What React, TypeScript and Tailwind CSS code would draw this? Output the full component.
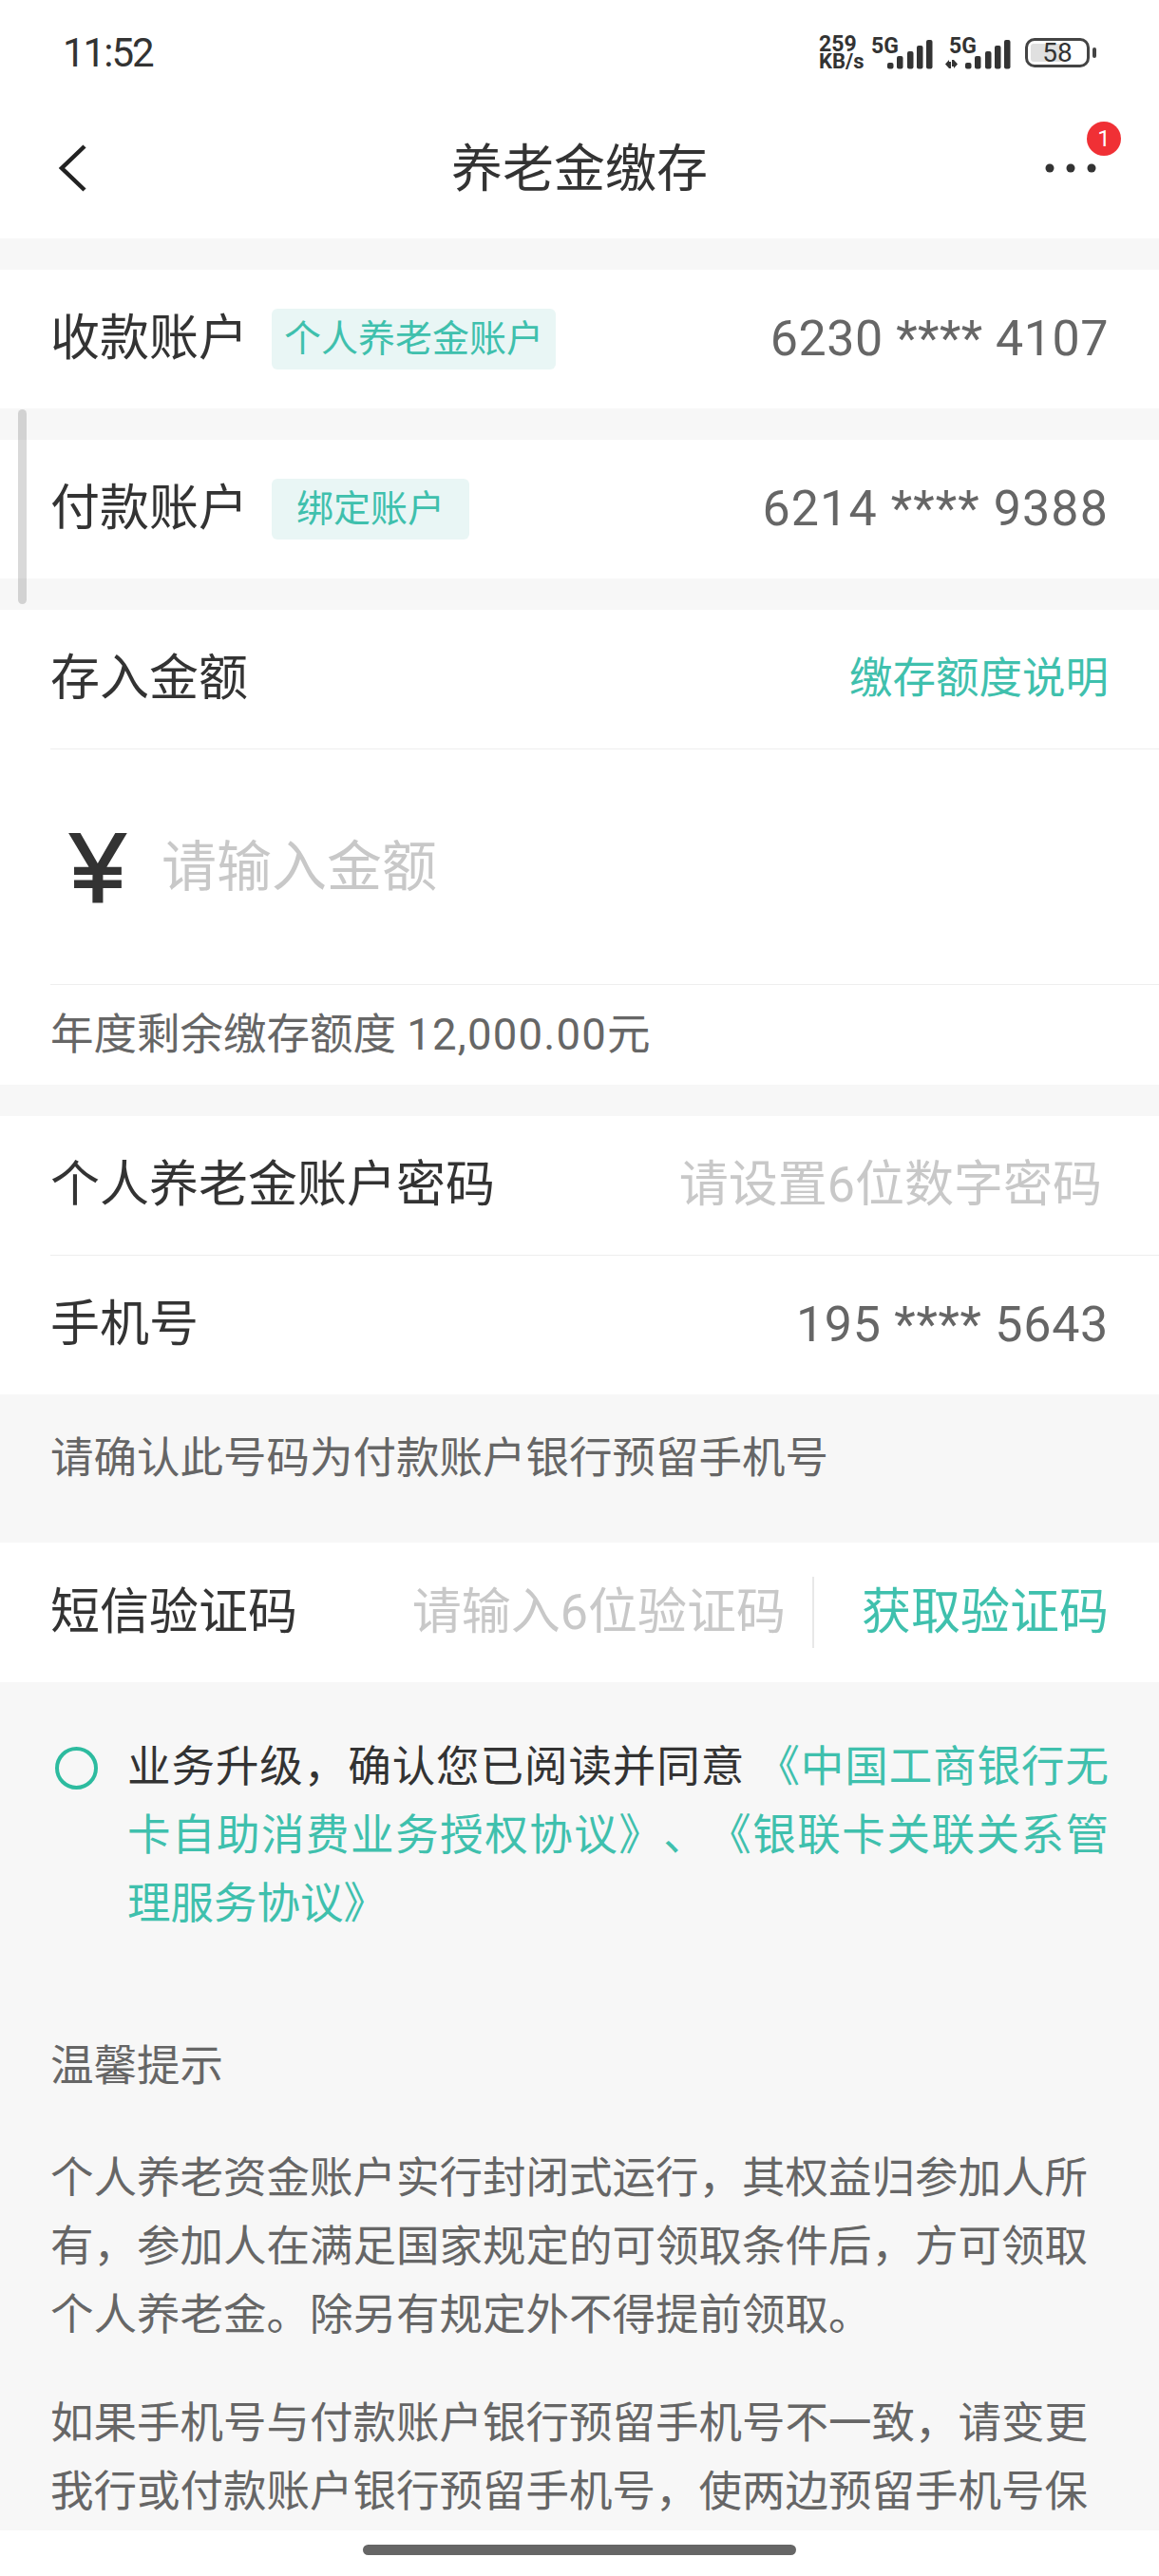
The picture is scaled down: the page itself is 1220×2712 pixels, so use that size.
import React from "react";

const C = "\uFF0C";

function Bars({ x, label, arrows, w }: { x: number; label: string; arrows?: boolean; w: number }) {
  const bars: [number, number][] = [
    [0, 65],
    [10, 58],
    [21, 53],
    [31, 47],
    [41, 41],
  ];
  return (
    <div className={w === 66 ? "relative h-[34px] w-[66px]" : "relative h-[34px] w-[69px]"}>
      <svg width={w} height={34} viewBox={`0 0 ${w} 34`} className="block">
        {arrows && (
          <g fill="#333">
            <path d="M0 28.5 L4 24 L4 33 Z" />
            <rect x="4" y="26" width="2" height="7" />
            <path d="M9 24 L13 28.5 L9 33 Z" />
            <rect x="7" y="24" width="2" height="7" />
          </g>
        )}
        {bars.map(([bx, top], i) => (
          <rect key={i} x={x + bx} y={top - 38} width={6.5} height={71.5 - top} rx={2} fill="#333" />
        ))}
      </svg>
      <span
        className={
          arrows
            ? "absolute left-[4px] top-[-1px] text-[23px] font-bold leading-[21px] text-[#333]"
            : "absolute left-0 top-[-1px] text-[23px] font-bold leading-[21px] text-[#333]"
        }
      >
        {label}
      </span>
    </div>
  );
}

function StatusBar() {
  return (
    <div className="flex h-[103px] items-center justify-between pl-[66px] pr-[66px] pt-[8px]">
      <span className="text-[42px] leading-none tracking-[-2px] text-[#333]">11:52</span>
      <div className="flex items-center">
        <div className="flex w-[55px] flex-col text-[#333]">
          <span className="text-[23px] font-bold leading-[18px]">259</span>
          <span className="text-[22px] font-bold leading-[18px]">KB/s</span>
        </div>
        <Bars x={17} label="5G" w={66} />
        <div className="w-[12px]" />
        <Bars x={21} label="5G" arrows w={69} />
        <div className="relative ml-[15px] h-[31px] w-[68px] rounded-[10px] border-[3px] border-[#444]">
          <div className="absolute bottom-[3px] left-[3px] top-[3px] w-[33px] rounded-[3px] bg-[#e0e0e0]" />
          <span className="absolute inset-0 flex items-center justify-center text-[28px] leading-none text-[#333]">58</span>
        </div>
        <div className="ml-[3px] h-[11px] w-[4px] rounded-[2px] bg-[#444]" />
      </div>
    </div>
  );
}

function NavBar() {
  return (
    <div className="flex h-[148px] items-center px-[60px]">
      <div className="w-[60px]">
        <svg width="32" height="50" viewBox="0 0 32 50" className="block">
          <path d="M29 2 L5 25 L29 48" fill="none" stroke="#222" strokeWidth="4.5" />
        </svg>
      </div>
      <div className="flex-1 pt-[3px] text-center text-[54px] leading-none text-[#333]">养老金缴存</div>
      <div className="relative w-[60px]">
        <svg width="54" height="10" viewBox="0 0 54 10" className="block">
          <circle cx="5" cy="5" r="4.5" fill="#333" />
          <circle cx="27" cy="5" r="4.5" fill="#333" />
          <circle cx="49" cy="5" r="4.5" fill="#333" />
        </svg>
        <span className="absolute left-[44px] top-[-44px] flex h-[36px] w-[36px] items-center justify-center rounded-full bg-[#f03035] text-[24px] leading-none text-white">
          1
        </span>
      </div>
    </div>
  );
}

function AccountRow({ label, tag, tagPad, value, track }: { label: string; tag: string; tagPad: string; value: string; track: string }) {
  return (
    <div className="flex h-[146px] items-center bg-white pl-[53px] pr-[53px]">
      <span className="text-[52px] leading-none text-[#333]">{label}</span>
      <span className={`ml-[25px] h-[64px] rounded-[6px] bg-[#e9f6f5] text-[39px] leading-[64px] text-[#3fc0ad] ${tagPad}`}>{tag}</span>
      <span className={`ml-auto text-[52px] leading-none text-[#666] ${track}`}>{value}</span>
    </div>
  );
}

export default function App() {
  return (
    <div className="relative flex h-[2712px] w-[1220px] flex-col overflow-hidden bg-white font-['Roboto','Noto_Sans_CJK_SC',sans-serif] [text-spacing-trim:space-all]">
      <StatusBar />
      <NavBar />

      <div className="h-[2413px] overflow-hidden bg-[#f7f7f7] pt-[33px]">
        <AccountRow label="收款账户" tag="个人养老金账户" tagPad="px-[13px]" value="6230 **** 4107" track="tracking-[0.5px]" />
        <div className="h-[33px]" />
        <AccountRow label="付款账户" tag="绑定账户" tagPad="px-[26px]" value="6214 **** 9388" track="tracking-[1.1px]" />
        <div className="h-[33px]" />

        <div className="bg-white pl-[53px]">
          <div className="flex h-[147px] items-center justify-between border-b border-[#eeeeee] pr-[53px]">
            <span className="text-[52px] leading-none text-[#333]">存入金额</span>
            <span className="text-[45.5px] leading-none text-[#3fc0ad]">缴存额度说明</span>
          </div>
          <div className="flex h-[248px] items-center border-b border-[#eeeeee]">
            <span className="ml-[21px] w-[96px] font-['Liberation_Sans',sans-serif] text-[104px] leading-none text-[#333] [-webkit-text-stroke:2px_#333]">¥</span>
            <span className="text-[58px] leading-none text-[#c8c8c8]">请输入金额</span>
          </div>
          <div className="flex h-[105px] items-center">
            <span className="text-[45.5px] leading-none text-[#666]">
              年度剩余缴存额度 <span className="tracking-[1.2px]">12,000.00</span>元
            </span>
          </div>
        </div>

        <div className="h-[33px]" />

        <div className="bg-white pl-[53px]">
          <div className="flex h-[147px] items-center justify-between border-b border-[#eeeeee] pr-[60px]">
            <span className="text-[52px] leading-none text-[#333]">个人养老金账户密码</span>
            <span className="text-[52px] leading-none text-[#c8c8c8]">请设置6位数字密码</span>
          </div>
          <div className="flex h-[146px] items-center justify-between pr-[53px]">
            <span className="text-[52px] leading-none text-[#333]">手机号</span>
            <span className="text-[52px] leading-none tracking-[0.7px] text-[#666]">195 **** 5643</span>
          </div>
        </div>

        <div className="flex h-[156px] items-center pb-[20px] pl-[53px] text-[45.5px] leading-none text-[#666]">请确认此号码为付款账户银行预留手机号</div>

        <div className="flex h-[147px] items-center bg-white pl-[53px] pr-[53px]">
          <span className="text-[52px] leading-none text-[#333]">短信验证码</span>
          <span className="ml-auto text-[52px] leading-none text-[#c8c8c8]">请输入6位验证码</span>
          <span className="ml-[28px] h-[75px] w-[2px] bg-[#e8e8e8]" />
          <span className="ml-[50px] text-[52px] leading-none text-[#3fc0ad]">获取验证码</span>
        </div>

        <div className="flex pl-[58px] pt-[54px]">
          <span className="mt-[14px] h-[45px] w-[45px] shrink-0 rounded-full border-[4px] border-[#2dbb9f]" />
          <p className="ml-[31px] w-[1033px] text-justify text-[45.5px] leading-[72px] text-[#333]">
            {`业务升级${C}确认您已阅读并同意 `}
            <span className="text-[#3fc0ad]">《中国工商银行无卡自助消费业务授权协议》、《银联卡关联关系管理服务协议》</span>
          </p>
        </div>

        <div className="ml-[53px] w-[1100px] pt-[99px] text-[45.5px] leading-[72px] text-[#666]">
          <p>温馨提示</p>
          <p className="mt-[46px]">{`个人养老资金账户实行封闭式运行${C}其权益归参加人所有${C}参加人在满足国家规定的可领取条件后${C}方可领取个人养老金。除另有规定外不得提前领取。`}</p>
          <p className="mt-[42px]">{`如果手机号与付款账户银行预留手机号不一致${C}请变更我行或付款账户银行预留手机号${C}使两边预留手机号保`}</p>
        </div>
      </div>

      <div className="flex flex-1 items-start justify-center bg-white pt-[15px]">
        <div className="h-[11px] w-[456px] rounded-full bg-[#666]" />
      </div>

      <div className="absolute left-[19px] top-[431px] h-[205px] w-[9px] rounded-full bg-black/15" />
    </div>
  );
}
